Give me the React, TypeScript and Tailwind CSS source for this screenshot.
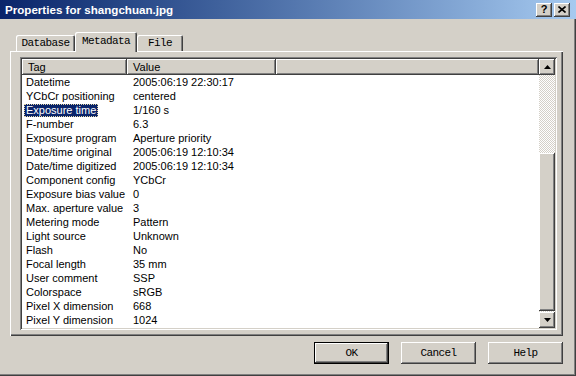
import React from 'react';

const rows: [string, string][] = [
  ['Datetime', '2005:06:19 22:30:17'],
  ['YCbCr positioning', 'centered'],
  ['Exposure time', '1/160 s'],
  ['F-number', '6.3'],
  ['Exposure program', 'Aperture priority'],
  ['Date/time original', '2005:06:19 12:10:34'],
  ['Date/time digitized', '2005:06:19 12:10:34'],
  ['Component config', 'YCbCr'],
  ['Exposure bias value', '0'],
  ['Max. aperture value', '3'],
  ['Metering mode', 'Pattern'],
  ['Light source', 'Unknown'],
  ['Flash', 'No'],
  ['Focal length', '35 mm'],
  ['User comment', 'SSP'],
  ['Colorspace', 'sRGB'],
  ['Pixel X dimension', '668'],
  ['Pixel Y dimension', '1024'],
];

const raised = 'shadow-[inset_-1px_-1px_#404040,inset_1px_1px_#ffffff,inset_-2px_-2px_#808080]';

function Arrow({ up }: { up?: boolean }) {
  return (
    <svg width="7" height="4" viewBox="0 0 7 4">
      <polygon points={up ? '3.5,0 7,4 0,4' : '0,0 7,0 3.5,4'} fill="#000" />
    </svg>
  );
}

export default function App() {
  return (
    <div className="w-[576px] h-[376px] bg-[#d4d0c8] flex flex-col shadow-[inset_-1px_-1px_#404040,inset_-2px_-2px_#808080] font-['Liberation_Sans',Arial,sans-serif] text-black">
      {/* Title bar */}
      <div className="h-[19px] flex items-center bg-linear-to-r from-[#0a246a] to-[#a6caf0] pl-[5px] pr-[6px]">
        <span className="flex-1 text-white font-bold text-[11.6px] leading-none">Properties for shangchuan.jpg</span>
        <div className={`w-[16px] h-[14px] bg-[#d4d0c8] ${raised} flex items-center justify-center text-[11px] font-bold leading-none`}>?</div>
        <div className={`ml-[2px] w-[16px] h-[14px] bg-[#d4d0c8] ${raised} flex items-center justify-center`}>
          <svg width="8" height="7" viewBox="0 0 8 7">
            <path d="M0.5 0.5 L7.5 6.5 M7.5 0.5 L0.5 6.5" stroke="#000" strokeWidth="1.6" />
          </svg>
        </div>
      </div>

      {/* Tabs + panel */}
      <div className="ml-[10px] mr-[13px] mt-[13px] flex flex-col font-['Liberation_Mono',monospace] text-[11px] tracking-[-0.6px]">
        <div className="h-[19px] flex items-end pl-[6px]">
          <div className="w-[59px] h-[16px] flex items-center justify-center shadow-[inset_1px_1px_#ffffff,inset_-1px_0_#404040,inset_-2px_0_#808080] rounded-t-[2px]">Database</div>
          <div className="relative z-10 -mb-[1px] w-[62px] h-[20px] bg-[#d4d0c8] flex items-center justify-center pb-[2px] shadow-[inset_1px_1px_#ffffff,inset_-1px_0_#404040,inset_-2px_0_#808080] rounded-t-[2px]">Metadata</div>
          <div className="w-[46px] h-[16px] flex items-center justify-center shadow-[inset_1px_1px_#ffffff,inset_-1px_0_#404040,inset_-2px_0_#808080] rounded-t-[2px]">File</div>
        </div>
        <div className="h-[285px] pt-[6px] pl-[10px] pr-[6px] pb-[6px] tracking-normal shadow-[inset_1px_1px_#ffffff,inset_-1px_-1px_#404040,inset_-2px_-2px_#808080]">
          {/* List view */}
          <div className="h-full p-[2px] bg-white flex shadow-[inset_1px_1px_#808080,inset_-1px_-1px_#ffffff,inset_2px_2px_#404040,inset_-2px_-2px_#d4d0c8] font-['Liberation_Sans',Arial,sans-serif] text-[11px]">
            <div className="flex-1 flex flex-col">
              <div className="h-[16px] flex bg-[#d4d0c8]">
                <div className={`w-[105px] pl-[6px] leading-[16px] ${raised}`}>Tag</div>
                <div className={`w-[149px] pl-[6px] leading-[16px] ${raised}`}>Value</div>
                <div className={`flex-1 ${raised}`} />
              </div>
              {rows.map(([tag, value]) => (
                <div key={tag} className="h-[14px] flex items-center whitespace-nowrap">
                  <div className="w-[105px] shrink-0 pl-[2px] flex">
                    {tag === 'Exposure time' ? (
                      <span className="h-[13px] leading-[11px] px-[1px] bg-[#0a246a] text-white border border-dotted border-[#e6d8a6]">{tag}</span>
                    ) : (
                      <span className="leading-[14px] px-[2px]">{tag}</span>
                    )}
                  </div>
                  <div className="pl-[6px] leading-[14px]">{value}</div>
                </div>
              ))}
            </div>
            {/* Scrollbar */}
            <div className="w-[16px] flex flex-col">
              <div className={`h-[16px] bg-[#d4d0c8] ${raised} flex items-center justify-center`}>
                <Arrow up />
              </div>
              <div className="h-[78px] bg-[image:repeating-conic-gradient(#ffffff_0%_25%,#d4d0c8_0%_50%)] bg-[length:2px_2px]" />
              <div className={`h-[158px] bg-[#d4d0c8] ${raised}`} />
              <div className="flex-1 bg-[image:repeating-conic-gradient(#ffffff_0%_25%,#d4d0c8_0%_50%)] bg-[length:2px_2px]" />
              <div className={`h-[16px] bg-[#d4d0c8] ${raised} flex items-center justify-center`}>
                <Arrow />
              </div>
            </div>
          </div>
        </div>
      </div>

      {/* Buttons */}
      <div className="mt-[6px] pr-[13px] flex justify-end gap-[12px] font-['Liberation_Mono',monospace] text-[11px] tracking-[-0.6px]">
        <button className="w-[75px] h-[22px] border border-black shadow-[inset_-1px_-1px_#404040,inset_1px_1px_#ffffff,inset_-2px_-2px_#808080]">OK</button>
        <button className={`w-[75px] h-[22px] ${raised}`}>Cancel</button>
        <button className={`w-[75px] h-[22px] ${raised}`}>Help</button>
      </div>
    </div>
  );
}
